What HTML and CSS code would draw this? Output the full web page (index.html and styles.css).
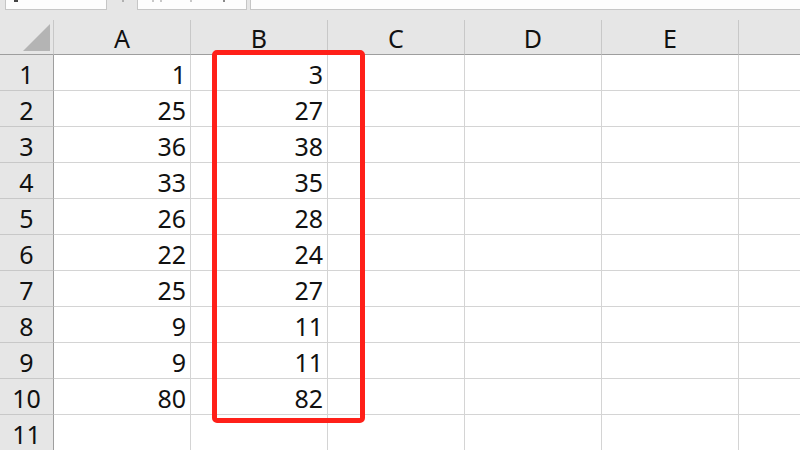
FILE: index.html
```html
<!DOCTYPE html>
<html lang="en">
<head>
    <meta charset="UTF-8">
    <title>Sheet1</title>
    <link rel="stylesheet" href="styles.css">
</head>
<body>
    <div class="toolbar">
        <div class="name-box"><span class="cut-glyph"></span></div>
        <div class="fx-area"><span class="fx-mark"></span></div>
        <div class="formula-box">
            <span class="faint" style="margin-left: 14px"></span>
            <span class="faint" style="margin-left: 6px"></span>
            <span class="faint" style="margin-left: 28px"></span>
            <span class="faint dark" style="margin-left: 31px"></span>
        </div>
        <div class="formula-input"></div>
    </div>

    <div class="sheet">
        <div class="corner"><span class="tri"></span></div>
        <div class="col-head">A</div>
        <div class="col-head">B</div>
        <div class="col-head">C</div>
        <div class="col-head">D</div>
        <div class="col-head">E</div>
        <div class="col-head last"></div>
    </div>
    <div class="sheet" id="rows"></div>

    <div class="highlight"></div>

    <script src="script.js"></script>
</body>
</html>
```

FILE: styles.css
```css
* {
    margin: 0;
    padding: 0;
    box-sizing: border-box;
}
body {
    width: 800px;
    height: 450px;
    overflow: hidden;
    background: #fff;
    font-family: "Noto Sans", "Noto Sans CJK SC", sans-serif;
    color: #111;
    position: relative;
}

/* top strip - formula bar cut off by the crop */
.toolbar {
    height: 20px;
    background: #e6e6e6;
    display: flex;
    align-items: flex-start;
}
.name-box,
.formula-box,
.formula-input {
    height: 10px;
    background: #fdfdfd;
    border: 1px solid #c6c6c6;
    border-top: none;
}
.name-box {
    margin-left: 5px;
    width: 102px;
    position: relative;
}
.cut-glyph {
    display: block;
    margin-left: 8px;
    width: 4px;
    height: 2px;
    background: #444;
}
.fx-area {
    width: 30px;
    height: 10px;
}
.fx-mark {
    display: block;
    margin-left: 15px;
    width: 2px;
    height: 2px;
    background: #b0b0b0;
}
.formula-box {
    width: 110px;
    display: flex;
    align-items: flex-start;
}
.faint {
    display: block;
    width: 2px;
    height: 2px;
    background: #c8c8c8;
}
.faint.dark {
    background: #8a8a8a;
}
.formula-input {
    margin-left: 3px;
    flex: 1;
    border-right: none;
}

/* grid */
.sheet {
    display: grid;
    grid-template-columns: 54px repeat(5, 137px) 1fr;
}
.corner,
.col-head {
    height: 35px;
    background: #e6e6e6;
    border-bottom: 1px solid #9e9e9e;
    border-right: 1px solid #c8c8c8;
    display: flex;
    align-items: center;
    justify-content: center;
    font-size: 25px;
    padding-top: 1px;
}
.col-head.last {
    border-right: none;
}
.corner {
    border-right: 1px solid #c8c8c8;
    position: relative;
}
.tri {
    position: absolute;
    left: 23px;
    top: 4px;
    width: 0;
    height: 0;
    border-left: 27px solid transparent;
    border-bottom: 27px solid #b4b4b4;
}
.row-head {
    height: 36px;
    background: #e6e6e6;
    border-right: 1px solid #9e9e9e;
    border-bottom: 1px solid #c8c8c8;
    display: flex;
    align-items: center;
    justify-content: center;
    font-size: 25px;
    padding-top: 2px;
}
.cell {
    height: 36px;
    border-right: 1px solid #d4d4d4;
    border-bottom: 1px solid #d4d4d4;
    display: flex;
    align-items: center;
    justify-content: flex-end;
    padding-right: 4px;
    padding-top: 2px;
    font-size: 25px;
}
.cell.last {
    border-right: none;
}

/* red marker around column B */
.highlight {
    position: absolute;
    left: 212px;
    top: 50px;
    width: 153px;
    height: 373px;
    border: 5px solid #ff2019;
    border-radius: 5px;
}
```

FILE: script.js
```js
const data = [
    [1, 3],
    [25, 27],
    [36, 38],
    [33, 35],
    [26, 28],
    [22, 24],
    [25, 27],
    [9, 11],
    [9, 11],
    [80, 82],
];

const rows = document.querySelector("#rows");

for (let r = 1; r <= 11; r++) {
    let head = document.createElement("div");
    head.className = "row-head";
    head.innerText = r;
    rows.appendChild(head);

    let vals = data[r - 1] || [];
    for (let c = 0; c < 6; c++) {
        let cell = document.createElement("div");
        cell.className = c === 5 ? "cell last" : "cell";
        if (vals[c] !== undefined) {
            cell.innerText = vals[c];
        }
        rows.appendChild(cell);
    }
}
```
